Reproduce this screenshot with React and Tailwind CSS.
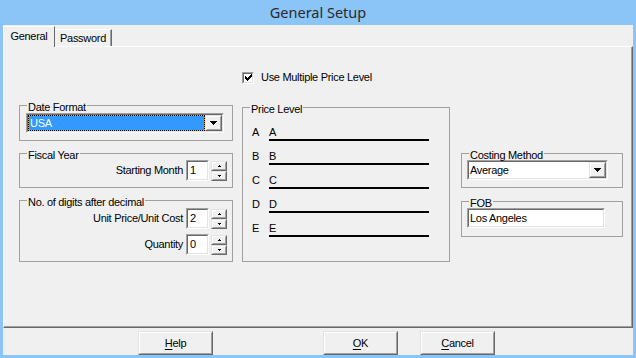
import React from "react";

const F = "font-['Liberation_Sans',Arial,sans-serif]";

function Sunken({ className = "", inner = "", children }) {
  return (
    <div className={"border border-t-[#a0a0a0] border-l-[#a0a0a0] border-b-white border-r-white " + className}>
      <div className={"h-full border border-t-[#696969] border-l-[#696969] border-b-[#e3e3e3] border-r-[#e3e3e3] bg-white flex " + inner}>
        {children}
      </div>
    </div>
  );
}

function Raised({ className = "", children }) {
  return (
    <div className={"border border-t-[#e3e3e3] border-l-[#e3e3e3] border-b-[#696969] border-r-[#696969] bg-[#f0f0f0] " + className}>
      <div className="h-full w-full border border-t-white border-l-white border-b-[#a0a0a0] border-r-[#a0a0a0] flex items-center justify-center">
        {children}
      </div>
    </div>
  );
}

function DownArrow() {
  return (
    <svg width="7" height="4" viewBox="0 0 7 4" shapeRendering="crispEdges">
      <path d="M0 0h7v1H0zM1 1h5v1H1zM2 2h3v1H2zM3 3h1v1H3z" fill="#000" />
    </svg>
  );
}

function Spinner() {
  return (
    <div className="w-[16px] h-[20px] flex flex-col">
      <Raised className="h-[10px]">
        <svg width="3" height="2" viewBox="0 0 3 2" shapeRendering="crispEdges">
          <path d="M1 0h1v1H1zM0 1h3v1H0z" fill="#000" />
        </svg>
      </Raised>
      <Raised className="h-[10px]">
        <svg width="3" height="2" viewBox="0 0 3 2" shapeRendering="crispEdges">
          <path d="M0 0h3v1H0zM1 1h1v1H1z" fill="#000" />
        </svg>
      </Raised>
    </div>
  );
}

function Group({ label, className = "", inner = "", children }) {
  return (
    <fieldset className={"border border-[#a0a0a0] m-0 p-0 min-w-0 " + className}>
      <legend className="ml-[7px] px-px h-[12px] leading-[16px]">{label}</legend>
      <div className={inner}>{children}</div>
    </fieldset>
  );
}

function SpinRow({ label, value }) {
  return (
    <div className="flex items-center justify-end h-[21px]">
      <span className="mr-[3px]">{label}</span>
      <Sunken className="w-[23px] h-[21px]" inner="items-center pl-[2px]">
        {value}
      </Sunken>
      <div className="ml-[2px]">
        <Spinner />
      </div>
    </div>
  );
}

function PriceRow({ letter }) {
  return (
    <div className="h-[24px] flex items-end">
      <div className="w-[17px] h-[15px] leading-[12px]">{letter}</div>
      <div className="w-[160px] h-[15px] leading-[12px] border-b-2 border-black">{letter}</div>
    </div>
  );
}

function Btn({ u, rest, className = "" }) {
  return (
    <Raised className={"w-[75px] h-[24px] " + className}>
      <span>
        <span className="underline underline-offset-[2px]">{u}</span>
        {rest}
      </span>
    </Raised>
  );
}

export default function App() {
  return (
    <div className={"w-[636px] h-[358px] bg-[#8bc4f6] flex flex-col text-[11px] tracking-[-0.3px] text-black " + F}>
      <div className="h-[25px] flex items-center justify-center text-[14.5px] tracking-normal text-[#2b2b2b] font-['Noto_Sans',sans-serif]">
        General Setup
      </div>
      <div className="mx-[3px] h-[330px] bg-[#f0f0f0] flex flex-col">
        <div className="h-[21px] flex items-end">
          <div className="relative z-10 -mb-px h-[21px] w-[52px] bg-[#f0f0f0] border-l border-t border-white border-r border-r-[#696969] flex justify-center pt-[2px] leading-[14px]">
            General
          </div>
          <div className="h-[17px] w-[57px] border-t border-white border-r border-r-[#696969] shadow-[inset_-1px_0_0_#a0a0a0] flex justify-center pt-[1px] leading-[14px]">
            Password
          </div>
        </div>
        <div className="h-[282px] border border-t-white border-l-white border-r-[#696969] border-b-[#696969] shadow-[inset_-1px_-1px_0_#a0a0a0] flex items-start pl-[15px]">
          {/* Left column */}
          <div className="w-[214px] mt-[52px] flex flex-col gap-[6px]">
            <Group label="Date Format" inner="pt-[2px] pb-[7px] px-[6px]">
              <Sunken className="w-[198px] h-[20px]" inner="items-stretch">
                <div className="w-[177px] bg-[#e8a33c]">
                  <div className="h-full border border-dotted border-black bg-[#3399ff] bg-clip-padding text-white leading-[14px] pl-px">
                    USA
                  </div>
                </div>
                <Raised className="w-[17px] ml-auto">
                  <DownArrow />
                </Raised>
              </Sunken>
            </Group>
            <Group label="Fiscal Year" inner="pt-[1px] pb-[6px] pr-[5px]">
              <SpinRow label="Starting Month" value="1" />
            </Group>
            <Group label="No. of digits after decimal" inner="pt-[2px] pb-[6px] pr-[5px] flex flex-col gap-[5px]">
              <SpinRow label="Unit Price/Unit Cost" value="2" />
              <SpinRow label="Quantity" value="0" />
            </Group>
          </div>

          {/* Middle column */}
          <div className="w-[208px] ml-[9px] mt-[24px] flex flex-col">
            <div className="h-[13px] flex items-center">
              <Sunken className="w-[12px] h-[12px]" inner="items-center justify-center">
                <svg width="7" height="7" viewBox="0 0 7 7" shapeRendering="crispEdges">
                  <path d="M6 0h1v1H6zM5 1h2v1H5zM0 2h1v1H0zM4 2h3v1H4zM0 3h2v1H0zM3 3h3v1H3zM0 4h5v1H0zM1 5h3v1H1zM2 6h1v1H2z" fill="#000" />
                </svg>
              </Sunken>
              <span className="ml-[7px]">Use Multiple Price Level</span>
            </div>
            <Group label="Price Level" className="mt-[17px]" inner="pt-[4px] pb-[24px] pl-[9px]">
              <PriceRow letter="A" />
              <PriceRow letter="B" />
              <PriceRow letter="C" />
              <PriceRow letter="D" />
              <PriceRow letter="E" />
            </Group>
          </div>

          {/* Right column */}
          <div className="w-[162px] ml-[11px] mt-[100px] flex flex-col gap-[7px]">
            <Group label="Costing Method" inner="pt-[1px] pb-[7px] pl-[5px]">
              <Sunken className="w-[141px] h-[20px]" inner="items-stretch">
                <div className="flex-1 leading-[16px] pl-px">Average</div>
                <Raised className="w-[17px]">
                  <DownArrow />
                </Raised>
              </Sunken>
            </Group>
            <Group label="FOB" inner="pt-[1px] pb-[8px] pl-[5px]">
              <Sunken className="w-[138px] h-[20px]" inner="items-center pl-px">
                Los Angeles
              </Sunken>
            </Group>
          </div>
        </div>
        <div className="flex-1 flex items-start pt-[3px] pl-[135px]">
          <Btn u="H" rest="elp" />
          <Btn u="O" rest="K" className="ml-[110px]" />
          <Btn u="C" rest="ancel" className="ml-[22px]" />
        </div>
      </div>
    </div>
  );
}
